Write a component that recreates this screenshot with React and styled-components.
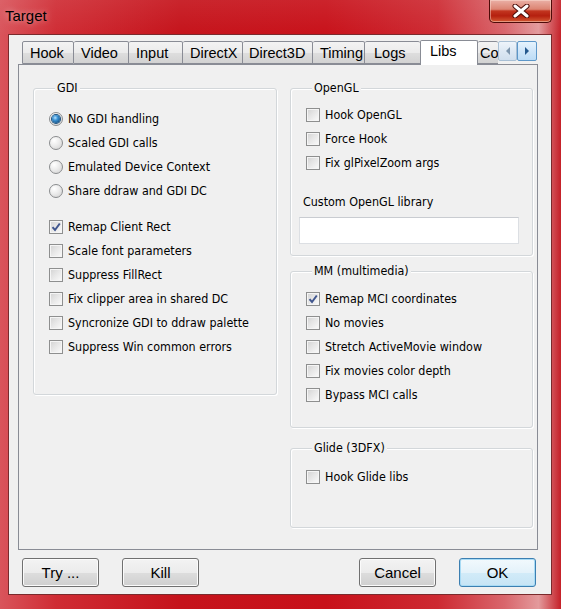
import React from 'react'
import styled, { createGlobalStyle } from 'styled-components'

const dialogFont = `"DejaVu Sans Condensed", "DejaVu Sans", sans-serif`
const chromeFont = `"Liberation Sans", Arial, sans-serif`

const GlobalStyle = createGlobalStyle`
  html, body {
    margin: 0;
    padding: 0;
  }
  body {
    width: 561px;
    height: 609px;
    overflow: hidden;
    background: #6e0c10;
  }
`

const Window = styled.div`
  width: 561px;
  height: 609px;
  display: flex;
  flex-direction: column;
  box-sizing: border-box;
  background:
    linear-gradient(180deg, rgba(255, 255, 255, 0.08) 0%, rgba(255, 255, 255, 0) 6%),
    linear-gradient(90deg, #d9545b 0%, #cf2c34 10%, #c5131b 32%, #c8111a 58%, #cd2a32 78%, #d9666c 90%, #e39a9c 96%, #c52028 100%);
`

const TitleBar = styled.div`
  height: 34px;
  flex: none;
  display: flex;
  align-items: flex-start;
  padding: 0 9px 0 5px;
`

const Title = styled.div`
  padding-top: 7px;
  font: 15px/18px ${chromeFont};
  color: #000;
  text-shadow: 0 0 6px rgba(255, 255, 255, 0.55);
`

const CloseButton = styled.div`
  margin-left: auto;
  width: 63px;
  height: 23px;
  box-sizing: border-box;
  border: 1px solid #4d0b08;
  border-top: none;
  border-radius: 0 0 5px 5px;
  background: linear-gradient(180deg, #eab0a6 0%, #dc8472 42%, #c23520 50%, #b5200f 72%, #d35a34 100%);
  box-shadow: inset 0 0 0 1px rgba(255, 230, 220, 0.45);
  display: grid;
  place-items: center;
`

const Client = styled.div`
  flex: 1;
  margin: 0 9px 14px 8px;
  box-sizing: border-box;
  border: 1px solid #7a2a2c;
  background: #f0f0f0;
  padding: 6px 13px 7px 9px;
  display: flex;
  flex-direction: column;
`

const TabStrip = styled.div`
  height: 23px;
  flex: none;
  display: flex;
  align-items: flex-end;
  padding-left: 4px;
  position: relative;
  z-index: 1;
`

const Tab = styled.div`
  width: ${p => p.$w}px;
  height: ${p => (p.$active ? 25 : 23)}px;
  margin-bottom: ${p => (p.$active ? -1 : 0)}px;
  box-sizing: border-box;
  flex: none;
  white-space: nowrap;
  border: 1px solid #898c95;
  border-left: ${p => (p.$first || p.$active ? '1px solid #898c95' : 'none')};
  border-right: ${p => (p.$clip || p.$beforeActive ? 'none' : '1px solid #898c95')};
  border-bottom: ${p => (p.$active ? 'none' : '1px solid #898c95')};
  border-radius: 2px 2px 0 0;
  background: ${p => (p.$active
    ? '#ffffff'
    : 'linear-gradient(180deg, #f3f3f3 0%, #ebebeb 50%, #dedede 51%, #d2d2d2 100%)')};
  padding: ${p => (p.$active ? 2 : 3)}px 0 0 ${p => p.$pl}px;
  font: 14.5px/17px ${chromeFont};
  color: #000;
`

const ScrollButtons = styled.div`
  align-self: flex-start;
  display: flex;
  flex: none;
`

const ScrollButton = styled.div`
  width: ${p => p.$w}px;
  height: 20px;
  box-sizing: border-box;
  border: 1px solid ${p => (p.$hot ? '#5d97c9' : '#a8bfd4')};
  border-radius: 2px;
  background: ${p => (p.$hot
    ? 'linear-gradient(180deg, #e6f3fd 0%, #cfe6f9 50%, #bcdcf6 100%)'
    : 'linear-gradient(180deg, #eef4fa 0%, #dde8f3 50%, #d0dfee 100%)')};
  display: grid;
  place-items: center;
`

const Panel = styled.div`
  height: 486px;
  flex: none;
  box-sizing: border-box;
  border: 1px solid #898c95;
  background: #f0f0f0;
  padding: 15px 4px 0 14px;
  display: grid;
  grid-template-columns: 244px 243px;
  column-gap: 13px;
  align-items: start;
`

const Column = styled.div`
  display: flex;
  flex-direction: column;
`

const Group = styled.fieldset`
  margin: ${p => p.$mt || 0}px 0 0 0;
  height: ${p => p.$h}px;
  min-width: 0;
  box-sizing: border-box;
  padding: ${p => p.$pt}px 8px 0 15px;
  border: 1px solid #d3d7da;
  border-radius: 3px;
  box-shadow: inset 1px 1px 0 #ffffff, 1px 1px 0 #ffffff;
  display: flex;
  flex-direction: column;
`

const Legend = styled.legend`
  margin-left: 6px;
  padding: 0 2px;
  background: #f0f0f0;
  font: 12.4px/16px ${dialogFont};
  color: #000;
`

const Row = styled.label`
  height: 24px;
  display: flex;
  align-items: center;
  gap: 5px;
  font: 12.4px/16px ${dialogFont};
  color: #000;
  white-space: nowrap;
`

const Spacer = styled.div`
  height: ${p => p.$h}px;
  flex: none;
`

const CheckBox = styled.span`
  width: 14px;
  height: 14px;
  flex: none;
  box-sizing: border-box;
  border: 1px solid #8e8f8f;
  background: linear-gradient(135deg, #d2d2d2 0%, #e6e6e6 45%, #fbfbfb 100%);
  box-shadow: inset 0 0 0 1px #f5f5f5;
  display: grid;
  place-items: center;
`

const RadioCircle = styled.span`
  width: 14px;
  height: 14px;
  flex: none;
  box-sizing: border-box;
  border-radius: 50%;
  border: 1px solid #8a8c8e;
  background: radial-gradient(circle at 35% 30%, #ffffff 0%, #ececec 45%, #cfcfcf 100%);
  display: grid;
  place-items: center;
`

const RadioDot = styled.span`
  width: 8px;
  height: 8px;
  border-radius: 50%;
  background: radial-gradient(circle at 40% 35%, #b6e2ff 0%, #3c93d4 35%, #0f4a7e 85%);
  box-shadow: 0 0 0 1px #1b4f7c;
`

const FieldLabel = styled.div`
  margin: 19px 0 0 -3px;
  font: 12.4px/16px ${dialogFont};
  color: #000;
`

const TextBox = styled.input`
  margin: 7px 0 0 -7px;
  width: 220px;
  height: 27px;
  box-sizing: border-box;
  border: 1px solid #dcdfe3;
  border-top-color: #c9ccd1;
  background: #ffffff;
  outline: none;
  font: 12.4px ${dialogFont};
`

const ButtonRow = styled.div`
  margin-top: 8px;
  display: flex;
  align-items: center;
  gap: 23px;
  padding: 0 2px 0 4px;
`

const Button = styled.button`
  width: 77px;
  height: 29px;
  box-sizing: border-box;
  margin-left: ${p => (p.$push ? 'auto' : '0')};
  border: 1px solid ${p => (p.$default ? '#3c7fb1' : '#707070')};
  border-radius: 3px;
  background: ${p => (p.$default
    ? 'linear-gradient(180deg, #f2f9fd 0%, #e4f2fa 50%, #d2ebf8 51%, #c6e4f5 100%)'
    : 'linear-gradient(180deg, #f3f3f3 0%, #ebebeb 50%, #dddddd 51%, #cfcfcf 100%)')};
  box-shadow: inset 0 0 0 1px ${p => (p.$default ? '#a8dbf5' : '#fbfbfb')};
  font: 15px ${chromeFont};
  color: #000;
  padding: 0;
`

const CloseGlyph = () => (
  <svg width="20" height="14" viewBox="0 0 20 14">
    <path d="M4 2 L16 12 M16 2 L4 12" stroke="#4a0c08" strokeWidth="5" strokeLinecap="round" />
    <path d="M4 2 L16 12 M16 2 L4 12" stroke="#ffffff" strokeWidth="3" strokeLinecap="round" />
  </svg>
)

const Arrow = ({ dir, color }) => (
  <svg width="6" height="8" viewBox="0 0 6 8">
    <path d={dir === 'left' ? 'M5 0 L1 4 L5 8 Z' : 'M1 0 L5 4 L1 8 Z'} fill={color} />
  </svg>
)

const Check = ({ label, checked }) => (
  <Row>
    <CheckBox>
      {checked && (
        <svg width="10" height="10" viewBox="0 0 10 10">
          <path d="M1.5 5.2 L4 8 L8.8 1.5" fill="none" stroke="#40568e" strokeWidth="2" />
        </svg>
      )}
    </CheckBox>
    {label}
  </Row>
)

const Radio = ({ label, selected }) => (
  <Row>
    <RadioCircle>{selected && <RadioDot />}</RadioCircle>
    {label}
  </Row>
)

const tabs = [
  { name: 'Hook', w: 52, pl: 7 },
  { name: 'Video', w: 55, pl: 7 },
  { name: 'Input', w: 54, pl: 7 },
  { name: 'DirectX', w: 60, pl: 7 },
  { name: 'Direct3D', w: 70, pl: 6 },
  { name: 'Timing', w: 52, pl: 7 },
  { name: 'Logs', w: 55, pl: 9 },
  { name: 'Libs', w: 58, pl: 9, active: true },
  { name: 'Co', w: 20, pl: 2, clip: true }
]

export default function App () {
  return (
    <Window>
      <GlobalStyle />
      <TitleBar>
        <Title>Target</Title>
        <CloseButton><CloseGlyph /></CloseButton>
      </TitleBar>
      <Client>
        <TabStrip>
          {tabs.map((t, i) => (
            <Tab
              key={t.name}
              $w={t.w}
              $pl={t.pl}
              $active={t.active}
              $clip={t.clip}
              $first={i === 0}
              $beforeActive={tabs[i + 1] && tabs[i + 1].active}
            >
              {t.name}
            </Tab>
          ))}
          <ScrollButtons>
            <ScrollButton $w={19}><Arrow dir='left' color='#7d95ad' /></ScrollButton>
            <ScrollButton $w={20} $hot><Arrow dir='right' color='#24598e' /></ScrollButton>
          </ScrollButtons>
        </TabStrip>
        <Panel>
          <Column>
            <Group $h={315} $pt={11}>
              <Legend>GDI</Legend>
              <Radio label='No GDI handling' selected />
              <Radio label='Scaled GDI calls' />
              <Radio label='Emulated Device Context' />
              <Radio label='Share ddraw and GDI DC' />
              <Spacer $h={12} />
              <Check label='Remap Client Rect' checked />
              <Check label='Scale font parameters' />
              <Check label='Suppress FillRect' />
              <Check label='Fix clipper area in shared DC' />
              <Check label='Syncronize GDI to ddraw palette' />
              <Check label='Suppress Win common errors' />
            </Group>
          </Column>
          <Column>
            <Group $h={176} $pt={7}>
              <Legend>OpenGL</Legend>
              <Check label='Hook OpenGL' />
              <Check label='Force Hook' />
              <Check label='Fix glPixelZoom args' />
              <FieldLabel>Custom OpenGL library</FieldLabel>
              <TextBox type='text' defaultValue='' />
            </Group>
            <Group $h={165} $pt={8} $mt={7}>
              <Legend>MM (multimedia)</Legend>
              <Check label='Remap MCI coordinates' checked />
              <Check label='No movies' />
              <Check label='Stretch ActiveMovie window' />
              <Check label='Fix movies color depth' />
              <Check label='Bypass MCI calls' />
            </Group>
            <Group $h={88} $pt={9} $mt={12}>
              <Legend>Glide (3DFX)</Legend>
              <Check label='Hook Glide libs' />
            </Group>
          </Column>
        </Panel>
        <ButtonRow>
          <Button>Try ...</Button>
          <Button>Kill</Button>
          <Button $push>Cancel</Button>
          <Button $default>OK</Button>
        </ButtonRow>
      </Client>
    </Window>
  )
}
